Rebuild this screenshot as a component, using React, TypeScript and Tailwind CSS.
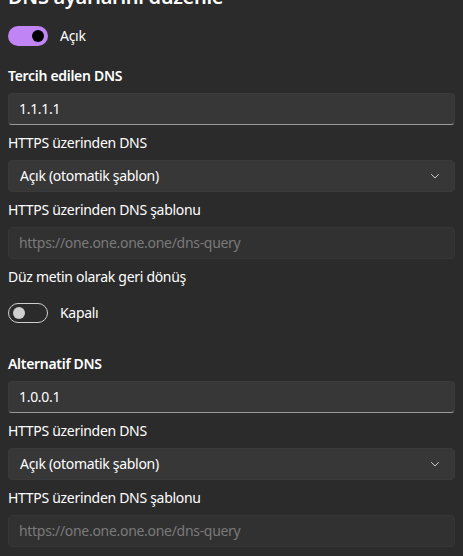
function Toggle({ on, label }: { on: boolean; label: string }) {
  return (
    <div className="flex items-center gap-3">
      {on ? (
        <div className="w-10 h-5 rounded-full bg-[#c084f5] flex items-center justify-end px-[4px]">
          <div className="w-3 h-3 rounded-full bg-black" />
        </div>
      ) : (
        <div className="w-10 h-5 rounded-full border border-[#cfcfcf] flex items-center px-[4px]">
          <div className="w-3 h-3 rounded-full bg-[#cfcfcf]" />
        </div>
      )}
      <span className="text-sm text-white">{label}</span>
    </div>
  )
}

function TextInput({ value }: { value: string }) {
  return (
    <div className="h-8 rounded-[4px] bg-[#373737] border border-[#3a3a3a] border-b-[#9a9a9a] flex items-center px-[10px] text-sm text-white">
      {value}
    </div>
  )
}

function Placeholder({ text }: { text: string }) {
  return (
    <div className="h-8 rounded-[4px] bg-[#313131] border border-[#363636] flex items-center px-[10px] text-sm text-[#7a7a7a]">
      {text}
    </div>
  )
}

function Select({ value }: { value: string }) {
  return (
    <div className="h-8 rounded-[4px] bg-[#373737] border border-[#3a3a3a] flex items-center justify-between pl-[11px] pr-[14px] text-sm text-white">
      <span>{value}</span>
      <svg width="10" height="10" viewBox="0 0 10 10" fill="none">
        <path d="M1.5 3.5 L5 7 L8.5 3.5" stroke="#d0d0d0" strokeWidth="1" strokeLinecap="round" strokeLinejoin="round" />
      </svg>
    </div>
  )
}

function DnsBlock({ title, ip }: { title: string; ip: string }) {
  return (
    <div className="flex flex-col">
      <div className="text-sm font-semibold text-white leading-5">{title}</div>
      <div className="mt-[7px]">
        <TextInput value={ip} />
      </div>
      <div className="text-sm text-white leading-5 mt-[8px]">HTTPS üzerinden DNS</div>
      <div className="mt-[7px]">
        <Select value="Açık (otomatik şablon)" />
      </div>
      <div className="text-sm text-white leading-5 mt-[8px]">HTTPS üzerinden DNS şablonu</div>
      <div className="mt-[7px]">
        <Placeholder text="https://one.one.one.one/dns-query" />
      </div>
    </div>
  )
}

export default function App() {
  return (
    <div
      className="w-[463px] h-[556px] overflow-hidden bg-[#2b2b2b] pl-2 pr-2 tracking-[-0.3px]"
      style={{ fontFamily: '"Noto Sans", "Open Sans", sans-serif' }}
    >
      <div className="-mt-[17px] text-xl font-semibold text-white leading-7">DNS ayarlarını düzenle</div>
      <div className="mt-[15px]">
        <Toggle on label="Açık" />
      </div>
      <div className="mt-[20px]">
        <DnsBlock title="Tercih edilen DNS" ip="1.1.1.1" />
      </div>
      <div className="text-sm text-white leading-5 mt-[8px]">Düz metin olarak geri dönüş</div>
      <div className="mt-[16px]">
        <Toggle on={false} label="Kapalı" />
      </div>
      <div className="mt-[31px]">
        <DnsBlock title="Alternatif DNS" ip="1.0.0.1" />
      </div>
    </div>
  )
}
